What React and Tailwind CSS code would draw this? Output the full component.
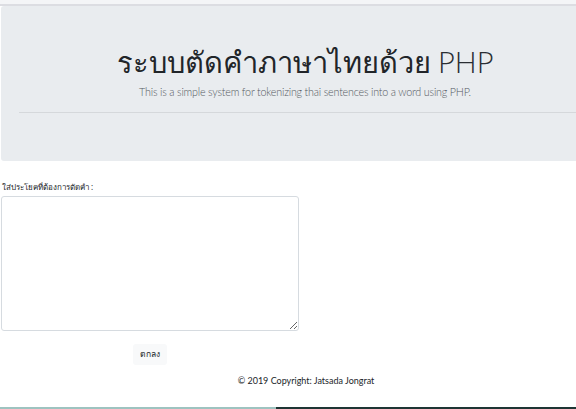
export default function App() {
  return (
    <div className="w-[576px] h-[409px] overflow-hidden bg-white flex flex-col font-['Noto_Sans','DejaVu_Sans',sans-serif] text-[#212529]">
      <div className="h-[4px] bg-[#f4f5f7] shrink-0" />
      <div className="h-[2px] bg-[#dcdde2] shrink-0" />

      <div className="ml-[1px] w-[608px] h-[155px] shrink-0 bg-[#e9ecef] rounded-[3px] flex flex-col items-center pt-[39px]">
        <h1 className="text-[29px] leading-[33px] whitespace-nowrap">
          <span className="font-normal">ระบบตัดคำภาษาไทยด้วย</span>{' '}
          <span className="font-['Lato',sans-serif] font-light text-[#2a2e33]">PHP</span>
        </h1>
        <p className="mt-[6px] font-['Lato',sans-serif] text-[10.75px] font-light text-[#555a5f] whitespace-nowrap tracking-[-0.2px]">
          This is a simple system for tokenizing thai sentences into a word using PHP.
        </p>
        <hr className="mt-[12px] ml-[18px] self-stretch border-t border-[#d5d8db]" />
      </div>

      <div className="w-[298px] ml-[1px] flex flex-col">
        <label className="mt-[20px] pl-[1px] text-[8px] leading-[12px] text-[#212529]">ใส่ประโยคที่ต้องการตัดคำ :</label>
        <textarea className="mt-[3px] h-[135px] w-[298px] border border-[#d6dbe0] rounded-[3px] bg-white resize-y" />
        <button className="mt-[13px] self-center w-[34px] h-[21px] rounded-[3px] bg-[#f8f9fa] text-[8.5px] text-[#212529]">
          ตกลง
        </button>
      </div>

      <div className="mt-[9px] w-[612px] text-center font-['Lato',sans-serif] text-[9px] text-[#212529] whitespace-nowrap">
        © 2019 Copyright: Jatsada Jongrat
      </div>

      <div className="flex-1" />
      <div className="h-[2px] flex shrink-0">
        <div className="w-[276px] bg-[#9ec3c0]" />
        <div className="flex-1 bg-[#1e3534]" />
      </div>
    </div>
  )
}
